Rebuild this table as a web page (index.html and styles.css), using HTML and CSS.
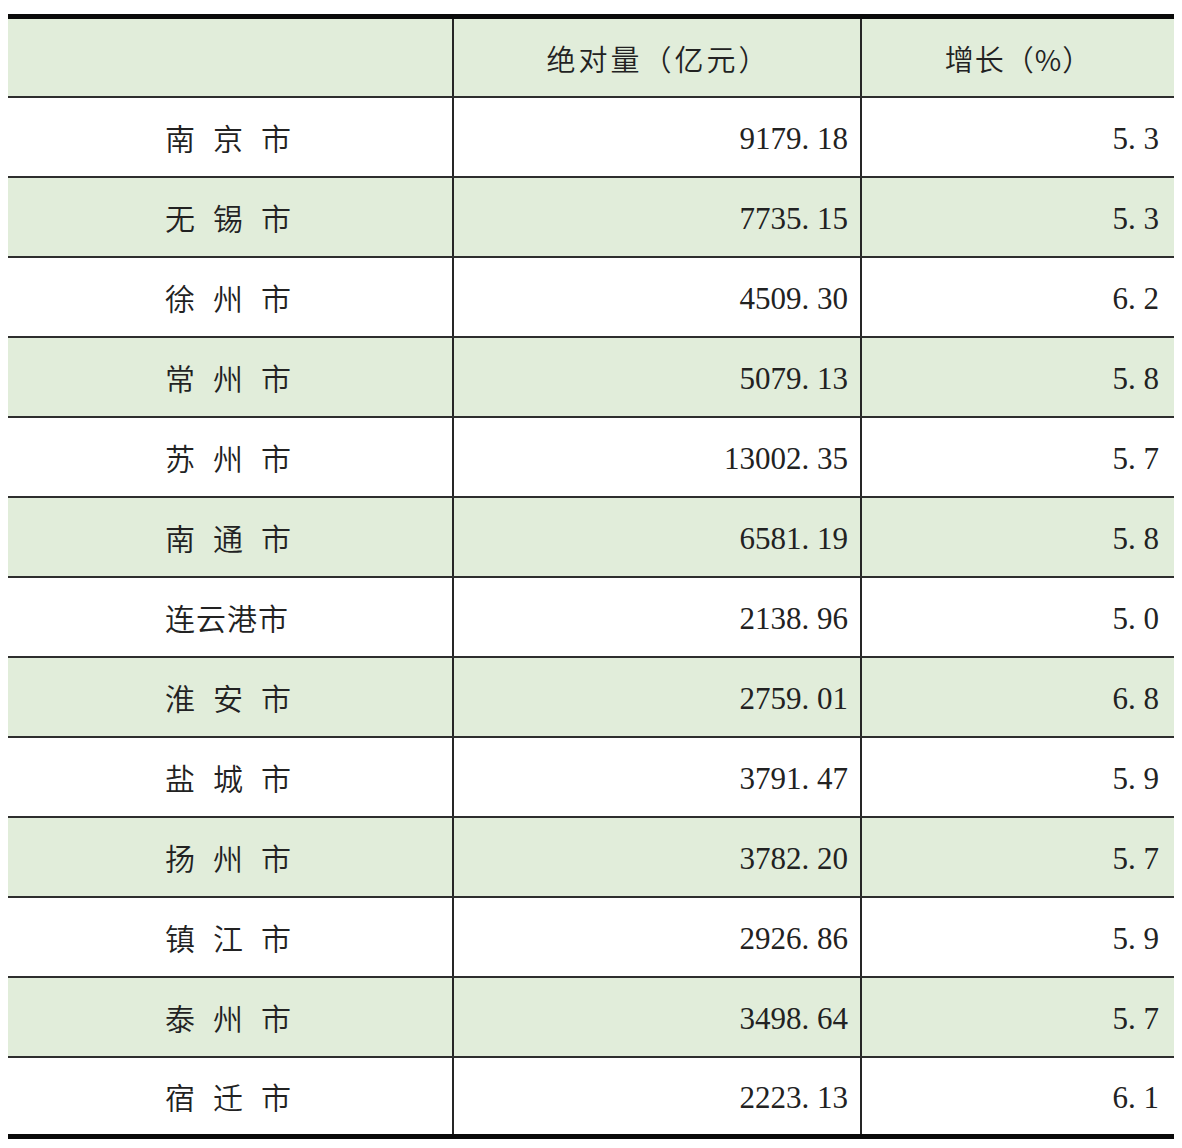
FILE: index.html
```html
<!DOCTYPE html>
<html lang="zh">
<head>
<meta charset="utf-8">
<title>江苏各市地区生产总值</title>
<link rel="stylesheet" href="styles.css">
</head>
<body>
<div class="table">
  <div class="row head">
    <div class="cell c1"></div>
    <div class="cell c2 th">绝对量（亿元）</div>
    <div class="cell c3 th th-narrow">增长（%）</div>
  </div>
  <div class="row">
    <div class="cell c1 city spaced">南京市</div>
    <div class="cell c2 num">9179<span class="dot">.</span>18</div>
    <div class="cell c3 num">5<span class="dot">.</span>3</div>
  </div>
  <div class="row alt">
    <div class="cell c1 city spaced">无锡市</div>
    <div class="cell c2 num">7735<span class="dot">.</span>15</div>
    <div class="cell c3 num">5<span class="dot">.</span>3</div>
  </div>
  <div class="row">
    <div class="cell c1 city spaced">徐州市</div>
    <div class="cell c2 num">4509<span class="dot">.</span>30</div>
    <div class="cell c3 num">6<span class="dot">.</span>2</div>
  </div>
  <div class="row alt">
    <div class="cell c1 city spaced">常州市</div>
    <div class="cell c2 num">5079<span class="dot">.</span>13</div>
    <div class="cell c3 num">5<span class="dot">.</span>8</div>
  </div>
  <div class="row">
    <div class="cell c1 city spaced">苏州市</div>
    <div class="cell c2 num">13002<span class="dot">.</span>35</div>
    <div class="cell c3 num">5<span class="dot">.</span>7</div>
  </div>
  <div class="row alt">
    <div class="cell c1 city spaced">南通市</div>
    <div class="cell c2 num">6581<span class="dot">.</span>19</div>
    <div class="cell c3 num">5<span class="dot">.</span>8</div>
  </div>
  <div class="row">
    <div class="cell c1 city tight">连云港市</div>
    <div class="cell c2 num">2138<span class="dot">.</span>96</div>
    <div class="cell c3 num">5<span class="dot">.</span>0</div>
  </div>
  <div class="row alt">
    <div class="cell c1 city spaced">淮安市</div>
    <div class="cell c2 num">2759<span class="dot">.</span>01</div>
    <div class="cell c3 num">6<span class="dot">.</span>8</div>
  </div>
  <div class="row">
    <div class="cell c1 city spaced">盐城市</div>
    <div class="cell c2 num">3791<span class="dot">.</span>47</div>
    <div class="cell c3 num">5<span class="dot">.</span>9</div>
  </div>
  <div class="row alt">
    <div class="cell c1 city spaced">扬州市</div>
    <div class="cell c2 num">3782<span class="dot">.</span>20</div>
    <div class="cell c3 num">5<span class="dot">.</span>7</div>
  </div>
  <div class="row">
    <div class="cell c1 city spaced">镇江市</div>
    <div class="cell c2 num">2926<span class="dot">.</span>86</div>
    <div class="cell c3 num">5<span class="dot">.</span>9</div>
  </div>
  <div class="row alt">
    <div class="cell c1 city spaced">泰州市</div>
    <div class="cell c2 num">3498<span class="dot">.</span>64</div>
    <div class="cell c3 num">5<span class="dot">.</span>7</div>
  </div>
  <div class="row last">
    <div class="cell c1 city spaced">宿迁市</div>
    <div class="cell c2 num">2223<span class="dot">.</span>13</div>
    <div class="cell c3 num">6<span class="dot">.</span>1</div>
  </div>
</div>
</body>
</html>
```

FILE: styles.css
```css
html, body {
  margin: 0;
  padding: 0;
  background: #ffffff;
}

body {
  padding: 14px 0 0 8px;
  color: #222222;
  font-family: "Noto Sans CJK SC", "Noto Sans", sans-serif;
  font-weight: 350;
}

.table {
  width: 1166px;
  border-top: 5px solid #0a0a0a;
  border-bottom: 5px solid #0a0a0a;
}

.row {
  display: grid;
  grid-template-columns: 444px 408px 314px;
  height: 78px;
  border-top: 2px solid #2e2e2e;
  background: #ffffff;
}

.row.head {
  height: 77px;
  border-top: none;
  background: #e1edda;
}

.row.alt {
  background: #e1edda;
}

.row.last {
  height: 76px;
}

.cell {
  display: flex;
  align-items: center;
  box-sizing: border-box;
}

.c2, .c3 {
  border-left: 2px solid #262626;
}

.th {
  justify-content: center;
  font-size: 29px;
  letter-spacing: 3px;
  padding-left: 3px;
}

.th-narrow {
  letter-spacing: 1px;
  padding-left: 1px;
}

.city {
  padding-left: 157px;
  font-size: 30px;
}

.city.spaced {
  letter-spacing: 18px;
}

.city.tight {
  letter-spacing: 1px;
}

.num {
  justify-content: flex-end;
  font-family: "Liberation Serif", "Times New Roman", serif;
  font-weight: 400;
  font-size: 31px;
  padding-top: 3px;
}

.c2.num {
  padding-right: 12px;
}

.c3.num {
  padding-right: 15px;
}

.dot {
  display: inline-block;
  width: 0.5em;
}
```
